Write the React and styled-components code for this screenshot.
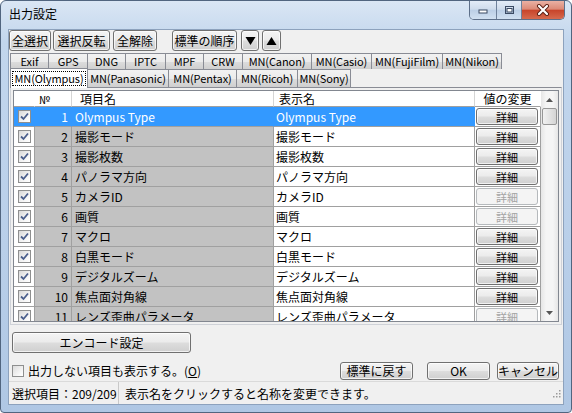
import React from "react"
import styled, { createGlobalStyle, css } from "styled-components"

const GlobalStyle = createGlobalStyle`
  html, body {
    margin: 0;
    padding: 0;
    background: #fff;
    overflow: hidden;
  }
  body {
    font-family: "Noto Sans CJK JP", "Noto Sans", sans-serif;
    font-size: 12px;
    color: #000;
  }
  * { box-sizing: border-box; }
`

const Window = styled.div`
  width: 572px;
  height: 413px;
  border: 1px solid #51657f;
  border-radius: 6px 6px 4px 4px;
  background: linear-gradient(180deg, #dae6f4 0%, #c2d6ed 10%, #b9cfe9 60%, #afc7e4 100%);
  padding: 0 7px 7px;
  display: flex;
  flex-direction: column;
`

const TitleBar = styled.div`
  height: 28px;
  display: flex;
  align-items: flex-start;
`

const Title = styled.div`
  padding: 5px 0 0 1px;
  font-size: 12px;
  line-height: 16px;
`

const WindowButtons = styled.div`
  margin-left: auto;
  margin-right: -1px;
  display: flex;
  height: 19px;
  border: 1px solid #5d6f89;
  border-top: none;
  border-radius: 0 0 5px 5px;
  overflow: hidden;
`

const CaptionButton = styled.div`
  width: ${p => p.$w}px;
  height: 100%;
  display: flex;
  align-items: center;
  justify-content: center;
  border-left: ${p => (p.$first ? "none" : "1px solid #6f819b")};
  background: ${p =>
    p.$close
      ? "linear-gradient(180deg, #eab1a4 0%, #dc8a77 45%, #c8452b 52%, #d66a4e 100%)"
      : "linear-gradient(180deg, #e3ecf7 0%, #cfdcec 45%, #bccfe6 52%, #d1e0f1 100%)"};
`

const Client = styled.div`
  flex: 1;
  min-height: 0;
  background: #f0f0f0;
  border: 1px solid #8da2bd;
  display: flex;
  flex-direction: column;
`

const buttonLook = css`
  border: 1px solid #707070;
  border-radius: 3px;
  background: linear-gradient(180deg, #f4f4f4 0%, #ebebeb 48%, #dddddd 52%, #cfcfcf 100%);
  font-family: inherit;
  font-size: 12px;
  color: #000;
  padding: 0;
  display: flex;
  align-items: center;
  justify-content: center;
  box-shadow: inset 0 0 0 1px rgba(255, 255, 255, 0.7);
`

const Toolbar = styled.div`
  display: flex;
  height: 21px;
`

const ToolButton = styled.button`
  ${buttonLook}
  width: ${p => p.$w}px;
  height: 21px;
  margin-left: ${p => p.$gap || 0}px;
`

const TabStrip = styled.div`
  margin: 2px 0 0 1px;
  width: 552px;
`

const TabRow = styled.div`
  display: flex;
  height: ${p => p.$h}px;
  align-items: flex-end;
`

const Tab = styled.div`
  width: ${p => p.$w}px;
  height: ${p => p.$h}px;
  border: 1px solid #898c95;
  border-bottom: none;
  margin-right: -1px;
  display: flex;
  align-items: center;
  justify-content: center;
  font-size: 11px;
  line-height: 13px;
  letter-spacing: -0.1px;
  white-space: nowrap;
  background: linear-gradient(180deg, #f2f2f2 0%, #ebebeb 50%, #dddddd 51%, #cfcfcf 100%);
  position: relative;
  ${p =>
    p.$active &&
    css`
      background: #fff;
      height: ${p.$h + 2}px;
      margin-bottom: -1px;
      z-index: 2;
    `}
`

const FocusText = styled.span`
  outline: 1px dotted #000;
  outline-offset: 0;
  padding: 0 1px;
  line-height: 13px;
`

const TabPanel = styled.div`
  width: 552px;
  margin-left: 1px;
  height: 238px;
  border: 1px solid #898c95;
  border-color: #898c95 #cfd2d8 #cfd2d8 #cfd2d8;
  padding: 2px;
`

const Grid = styled.div`
  width: 546px;
  height: 232px;
  border: 1px solid #828790;
  background: #fff;
  display: flex;
`

const GridBody = styled.div`
  width: 527px;
  height: 100%;
  overflow: hidden;
`

const Row = styled.div`
  display: grid;
  grid-template-columns: 21px 37px 202px 201px 66px;
  height: ${p => (p.$header ? 16 : 20)}px;
`

const Cell = styled.div`
  border-right: 1px solid ${p => (p.$sel ? "#3399ff" : "#a0a0a0")};
  border-bottom: 1px solid #a0a0a0;
  display: flex;
  align-items: center;
  overflow: hidden;
  white-space: nowrap;
  font-size: 12px;
  line-height: 14px;
  justify-content: ${p => p.$align || "flex-start"};
  padding: ${p => p.$pad || "0"};
  background: ${p => (p.$sel ? "#3399ff" : p.$gray ? "#c2c2c2" : "#fff")};
  color: ${p => (p.$sel ? "#fff" : "#000")};
`

const HeaderCell = styled(Cell)`
  background: #fff;
  font-size: ${p => p.$size || 12}px;
  border-right-color: ${p => (p.$noline ? "#fff" : "#d5d5d5")};
`

const Check = styled.span`
  width: 13px;
  height: 13px;
  border: 1px solid #8e8f8f;
  background: linear-gradient(135deg, #d8d8d8 0%, #f4f4f4 60%, #ffffff 100%);
  display: flex;
  align-items: center;
  justify-content: center;
  flex-shrink: 0;
`

const DetailButton = styled.button`
  ${buttonLook}
  width: 62px;
  height: 17px;
  margin-left: 1px;
  font-size: 11px;
  ${p =>
    p.disabled &&
    css`
      border-color: #b5b9bc;
      background: #f4f4f4;
      color: #a3a3a3;
      box-shadow: none;
    `}
`

const ScrollBar = styled.div`
  width: 17px;
  height: 100%;
  background: linear-gradient(90deg, #e6e6e6 0%, #f5f5f5 30%, #f5f5f5 70%, #e6e6e6 100%);
  display: flex;
  flex-direction: column;
  align-items: center;
`

const ArrowBox = styled.div`
  width: 17px;
  height: 17px;
  display: flex;
  align-items: center;
  justify-content: center;
  margin-top: ${p => (p.$bottom ? "auto" : "0")};
`

const Thumb = styled.div`
  width: 15px;
  height: 17px;
  border: 1px solid #979797;
  border-radius: 2px;
  background: linear-gradient(90deg, #f1f1f1 0%, #e3e3e3 50%, #d4d4d4 100%);
`

const EncodeButton = styled.button`
  ${buttonLook}
  width: 179px;
  height: 21px;
  margin: 7px 0 0 3px;
`

const BottomRow = styled.div`
  display: flex;
  align-items: center;
  height: 19px;
  margin-top: 8px;
  padding: 0 4px 0 3px;
`

const SmallCheck = styled.span`
  width: 12px;
  height: 12px;
  border: 1px solid #8e8f8f;
  background: linear-gradient(135deg, #dcdcdc 0%, #f6f6f6 70%, #fff 100%);
  margin-right: 4px;
`

const Label = styled.span`
  font-size: 12px;
  line-height: 14px;
  margin-right: auto;
`

const DialogButton = styled.button`
  ${buttonLook}
  width: ${p => p.$w}px;
  height: 18px;
  margin-left: ${p => p.$gap}px;
`

const StatusBar = styled.div`
  margin-top: auto;
  height: 23px;
  display: flex;
  align-items: center;
  border-top: 1px solid #dadada;
  font-size: 12px;
`

const StatusPane = styled.div`
  padding-left: ${p => p.$padl}px;
  height: 100%;
  display: flex;
  align-items: center;
  white-space: nowrap;
  border-right: ${p => (p.$sep ? "1px solid #c8c8c8" : "none")};
  width: ${p => (p.$w ? `${p.$w}px` : "auto")};
`

const Grip = styled.div`
  align-self: flex-end;
  margin: 0 2px 3px auto;
`

const Triangle = ({ up }) => (
  <svg width="11" height="10" viewBox="0 0 11 10">
    <polygon points={up ? "5.5,1 10.5,9 0.5,9" : "0.5,1 10.5,1 5.5,9"} fill="#000" />
  </svg>
)

const CheckMark = () => (
  <svg width="9" height="9" viewBox="0 0 9 9">
    <path d="M1 4.5 L3.5 7 L8 1.5" stroke="#4a5e8c" strokeWidth="1.8" fill="none" />
  </svg>
)

const SmallArrow = ({ up }) => (
  <svg width="7" height="4" viewBox="0 0 7 4">
    <polygon points={up ? "3.5,0 7,4 0,4" : "0,0 7,0 3.5,4"} fill="#555" />
  </svg>
)

const tabsTop = [
  ["Exif", 39],
  ["GPS", 40],
  ["DNG", 39],
  ["IPTC", 41],
  ["MPF", 39],
  ["CRW", 40],
  ["MN(Canon)", 70],
  ["MN(Casio)", 61],
  ["MN(FujiFilm)", 72],
  ["MN(Nikon)", 60],
]

const tabsBottom = [
  ["MN(Olympus)", 78, true],
  ["MN(Panasonic)", 82],
  ["MN(Pentax)", 69],
  ["MN(Ricoh)", 62],
  ["MN(Sony)", 54],
]

const rows = [
  ["Olympus Type", true],
  ["撮影モード", true],
  ["撮影枚数", true],
  ["パノラマ方向", true],
  ["カメラID", false],
  ["画質", false],
  ["マクロ", true],
  ["白黒モード", true],
  ["デジタルズーム", true],
  ["焦点面対角線", true],
  ["レンズ歪曲パラメータ", false],
]

const App = () => (
  <>
    <GlobalStyle />
    <Window>
      <TitleBar>
        <Title>出力設定</Title>
        <WindowButtons>
          <CaptionButton $w={26} $first>
            <svg width="10" height="8" viewBox="0 0 10 8">
              <rect x="1" y="4" width="8" height="3" fill="#fff" stroke="#3b4a63" strokeWidth="1" />
            </svg>
          </CaptionButton>
          <CaptionButton $w={25}>
            <svg width="11" height="10" viewBox="0 0 11 10">
              <rect x="1.5" y="1.5" width="8" height="7" fill="none" stroke="#3b4a63" strokeWidth="1" />
              <rect x="3" y="3.5" width="5" height="3.5" fill="#fff" stroke="#3b4a63" strokeWidth="1" />
            </svg>
          </CaptionButton>
          <CaptionButton $w={43} $close>
            <svg width="14" height="12" viewBox="0 0 14 12">
              <path d="M3 2 L11 10 M11 2 L3 10" stroke="#5a1f14" strokeWidth="4" strokeLinecap="round" />
              <path d="M3 2 L11 10 M11 2 L3 10" stroke="#fff" strokeWidth="2.2" strokeLinecap="round" />
            </svg>
          </CaptionButton>
        </WindowButtons>
      </TitleBar>
      <Client>
        <Toolbar>
          <ToolButton $w={42}>全選択</ToolButton>
          <ToolButton $w={57} $gap={2}>選択反転</ToolButton>
          <ToolButton $w={44} $gap={3}>全解除</ToolButton>
          <ToolButton $w={65} $gap={15}>標準の順序</ToolButton>
          <ToolButton $w={18} $gap={4}><Triangle /></ToolButton>
          <ToolButton $w={19} $gap={3}><Triangle up /></ToolButton>
        </Toolbar>
        <TabStrip>
          <TabRow $h={16}>
            {tabsTop.map(([t, w]) => (
              <Tab key={t} $w={w} $h={16}>{t}</Tab>
            ))}
          </TabRow>
          <TabRow $h={18}>
            {tabsBottom.map(([t, w, active]) => (
              <Tab key={t} $w={w} $h={18} $active={active}>
                {active ? <FocusText>{t}</FocusText> : t}
              </Tab>
            ))}
          </TabRow>
        </TabStrip>
        <TabPanel>
          <Grid>
            <GridBody>
              <Row $header>
                <HeaderCell $noline />
                <HeaderCell $pad="0 0 0 4px" $size={11}>№</HeaderCell>
                <HeaderCell $pad="0 0 0 8px">項目名</HeaderCell>
                <HeaderCell $pad="0 0 0 5px">表示名</HeaderCell>
                <HeaderCell $align="center" $noline>値の変更</HeaderCell>
              </Row>
              {rows.map(([name, enabled], i) => {
                const sel = i === 0
                return (
                  <Row key={i}>
                    <Cell $sel={sel} $align="center">
                      <Check><CheckMark /></Check>
                    </Cell>
                    <Cell $sel={sel} $gray $align="flex-end" $pad="0 3px 0 0">{i + 1}</Cell>
                    <Cell $sel={sel} $gray $pad="0 0 0 3px">{name}</Cell>
                    <Cell $sel={sel} $pad="0 0 0 2px">{name}</Cell>
                    <Cell>
                      <DetailButton disabled={!enabled}>詳細</DetailButton>
                    </Cell>
                  </Row>
                )
              })}
            </GridBody>
            <ScrollBar>
              <ArrowBox><SmallArrow up /></ArrowBox>
              <Thumb />
              <ArrowBox $bottom><SmallArrow /></ArrowBox>
            </ScrollBar>
          </Grid>
        </TabPanel>
        <EncodeButton>エンコード設定</EncodeButton>
        <BottomRow>
          <SmallCheck />
          <Label>出力しない項目も表示する。(<u>O</u>)</Label>
          <DialogButton $w={73} $gap={0}>標準に戻す</DialogButton>
          <DialogButton $w={63} $gap={14}>OK</DialogButton>
          <DialogButton $w={62} $gap={7}>キャンセル</DialogButton>
        </BottomRow>
        <StatusBar>
          <StatusPane $padl={3} $w={110} $sep>選択項目：209/209</StatusPane>
          <StatusPane $padl={6}>表示名をクリックすると名称を変更できます。</StatusPane>
          <Grip>
            <svg width="10" height="10" viewBox="0 0 10 10">
              {[[8, 2], [8, 5], [5, 5], [8, 8], [5, 8], [2, 8]].map(([x, y], k) => (
                <rect key={k} x={x} y={y} width="1.5" height="1.5" fill="#9a9a9a" />
              ))}
            </svg>
          </Grip>
        </StatusBar>
      </Client>
    </Window>
  </>
)

export default App
